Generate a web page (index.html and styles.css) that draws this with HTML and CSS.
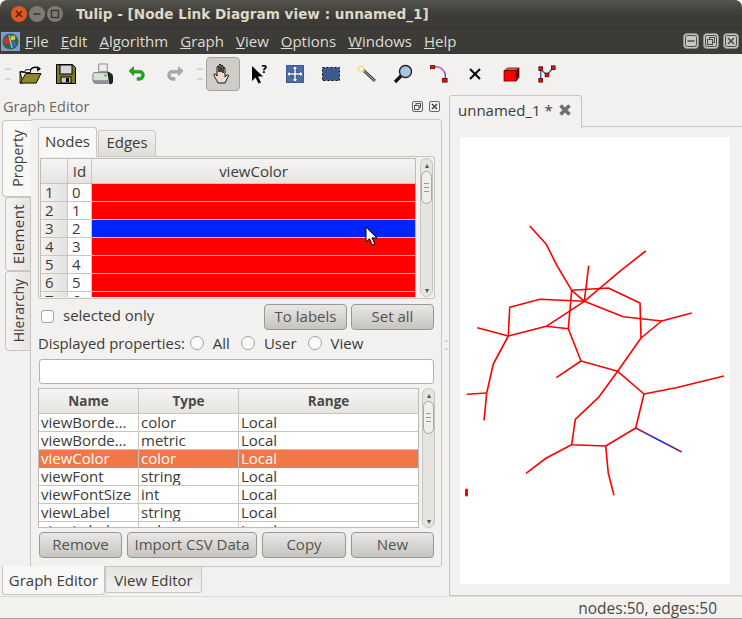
FILE: index.html
```html
<!DOCTYPE html>
<html lang="en">
<head>
<meta charset="utf-8">
<title>Tulip</title>
<link rel="stylesheet" href="styles.css">
</head>
<body>
<div class="window">
  <header class="titlebar">
    <div class="wm-buttons">
      <span class="wm wm-close"><svg width="16" height="16" viewBox="0 0 16 16"><path d="M5 5l6 6M11 5l-6 6" stroke="#4a1a08" stroke-width="1.4"/></svg></span>
      <span class="wm"><svg width="16" height="16" viewBox="0 0 16 16"><path d="M4.5 8h7" stroke="#33322e" stroke-width="1.6"/></svg></span>
      <span class="wm"><svg width="16" height="16" viewBox="0 0 16 16"><rect x="4.5" y="4.5" width="7" height="7" fill="none" stroke="#33322e" stroke-width="1.3"/></svg></span>
    </div>
    <div class="title">Tulip - [Node Link Diagram view : unnamed_1]</div>
  </header>
  <nav class="menubar">
    <svg class="app-icon" width="19" height="19" viewBox="0 0 19 19"><rect width="19" height="19" fill="#7f9ad8"/><circle cx="9.500" cy="9.500" r="8" fill="#2a6a3a"/><circle cx="6" cy="9" r="3.200" fill="#d03030"/><circle cx="12" cy="6" r="2.400" fill="#e0c040"/><circle cx="12" cy="12" r="3" fill="#4060c0"/><path d="M8 3l3 13" stroke="#9ad0a0" stroke-width="1.200"/></svg>
    <span class="menu-item"><u>F</u>ile</span>
    <span class="menu-item"><u>E</u>dit</span>
    <span class="menu-item"><u>A</u>lgorithm</span>
    <span class="menu-item"><u>G</u>raph</span>
    <span class="menu-item"><u>V</u>iew</span>
    <span class="menu-item"><u>O</u>ptions</span>
    <span class="menu-item"><u>W</u>indows</span>
    <span class="menu-item"><u>H</u>elp</span>
    <div class="mdi-buttons">
      <span class="mdi-btn"><svg width="14" height="14" viewBox="0 0 14 14"><rect x="1.500" y="1.500" width="11" height="11" rx="2" fill="none" stroke="#4c4b46"/><path d="M3.500 7h7" stroke="#4c4b46" stroke-width="1.500"/></svg></span>
      <span class="mdi-btn"><svg width="14" height="14" viewBox="0 0 14 14"><rect x="1.500" y="1.500" width="11" height="11" rx="2" fill="none" stroke="#4c4b46"/><rect x="5.500" y="3.500" width="5" height="5" fill="none" stroke="#4c4b46"/><rect x="3.500" y="5.500" width="5" height="5" fill="#c8c6c0" stroke="#4c4b46"/></svg></span>
      <span class="mdi-btn"><svg width="14" height="14" viewBox="0 0 14 14"><rect x="1.500" y="1.500" width="11" height="11" rx="2" fill="none" stroke="#4c4b46"/><path d="M4 4l6 6M10 4l-6 6" stroke="#4c4b46" stroke-width="1.700"/></svg></span>
    </div>
  </nav>
  <div class="toolbar">
    <span class="grip"></span>
    <span class="tool"><svg width="23" height="19" viewBox="0 0 24 20"><path d="M1 7h5l1-2h5v3H5z" fill="#fff" stroke="#000"/><path d="M1 7v12h3z" fill="#f4f040" stroke="#000"/><path d="M1 19L7 9h16l-5 10z" fill="#8f8628" stroke="#000"/><path d="M12 5c2-3 5-3 8-2" fill="none" stroke="#000" stroke-width="1.500"/><path d="M23 4l-4 3V1z"/></svg></span>
    <span class="tool"><svg width="20" height="20" viewBox="0 0 20 20"><path d="M.5.5h16l3 3v16H.5z" fill="#7d7a1e" stroke="#000"/><rect x="4" y="1" width="12" height="9" fill="#d8d4dc" stroke="#000"/><rect x="5" y="13" width="10" height="6" fill="#c8c8c8" stroke="#000"/><rect x="10" y="14" width="3" height="4" fill="#000"/></svg></span>
    <span class="tool"><svg width="23" height="22" viewBox="0 0 24 23"><path d="M8 1h9v8H8z" fill="#eee" stroke="#888"/><path d="M3 10h15l4 2v7H2v-7z" fill="#ddd" stroke="#777"/><path d="M17 9c4 1 6 3 6 6v4c0 2-2 4-4 3z" fill="#222"/><path d="M2 18h17l-1 4H5q-3 0-3-4z" fill="#8e8e9a"/><circle cx="15" cy="13" r="1.300" fill="#2bd32b"/></svg></span>
    <span class="tool"><svg width="18" height="18" viewBox="0 0 20 20"><path d="M5 6h7c3 0 5 2 5 5s-2 6-6 6H9v-3h2c2 0 3-1 3-3s-1-2-3-2H5v3L0 6.500 5 2z" fill="#18b018" stroke="#0a6a0a" stroke-width=".6"/></svg></span>
    <span class="tool"><svg width="18" height="18" viewBox="0 0 20 20"><path d="M15 6H8c-3 0-5 2-5 5s2 6 6 6h2v-3H9c-2 0-3-1-3-3s1-2 3-2h6v3l5-5.500L15 2z" fill="#a9a9a9" stroke="#8a8a8a" stroke-width=".6"/></svg></span>
    <span class="grip grip-second"></span>
    <span class="tool tool-active"><svg width="20" height="22" viewBox="0 0 20 22"><path d="M5 20c-1-3-4-6-4-8s2-1 3 1V4q1-2 2 0v5-7q1-2 2 0v7-6q1-2 2 0v7-5q1-2 2 0v9l2-2c2-1 2 1 1 2l-3 6z" fill="#e8dcc8" stroke="#000" stroke-width=".9"/></svg></span>
    <span class="tool"><svg width="20" height="20" viewBox="0 0 20 20"><path d="M3 2v15l3.500-3.500 3 6 2.500-1-3-6h5z"/><text class="qmark" x="12" y="9">?</text></svg></span>
    <span class="tool"><svg width="18" height="18" viewBox="0 0 18 18"><rect width="18" height="18" fill="#3b5b90"/><rect x="1" y="1" width="16" height="16" fill="#4a6ea8"/><path d="M9 1l3 3h-2v4h4V6l3 3-3 3v-2h-4v4h2l-3 3-3-3h2v-4H4v2L1 9l3-3v2h4V4H6z" fill="#fff" stroke="#1c2c50" stroke-width=".5"/></svg></span>
    <span class="tool"><svg width="18" height="14" viewBox="0 0 18 14"><rect x=".5" y=".5" width="17" height="13" fill="#3b5b90" stroke="#000" stroke-dasharray="2 2"/></svg></span>
    <span class="tool"><svg width="20" height="18" viewBox="0 0 20 18"><path d="M5 4l13 12" stroke="#333" stroke-width="3"/><path d="M5 4l13 12" stroke="#ccc" stroke-width="1"/><circle cx="4" cy="4" r="3.500" fill="#f0e090"/><circle cx="4" cy="4" r="1.600" fill="#fff"/></svg></span>
    <span class="tool"><svg width="20" height="20" viewBox="0 0 20 20"><circle cx="12.500" cy="7.500" r="6" fill="#a8c4e4" stroke="#222" stroke-width="1.400"/><path d="M8 12l-6 6" stroke="#111" stroke-width="3.200"/></svg></span>
    <span class="tool"><svg width="18" height="18" viewBox="0 0 20 20"><path d="M2 2h6q7 1 9 8v7" fill="none" stroke="#355c9a" stroke-width="1.500"/><path d="M8 2q5 1 8 6" fill="none" stroke="#ff60e0" stroke-width="2"/><rect y="0" width="5" height="4" fill="#e01818" stroke="#600"/><rect x="14" y="15" width="5" height="4" fill="#e01818" stroke="#600"/></svg></span>
    <span class="tool"><svg width="12" height="12" viewBox="0 0 12 12"><path d="M1 1l10 10M11 1L1 11" stroke="#000" stroke-width="2"/></svg></span>
    <span class="tool"><svg width="17" height="15" viewBox="0 0 18 16"><path d="M1 4l4-3h12l-3 3z" fill="#ff5050" stroke="#300" stroke-width=".7"/><path d="M14 4l3-3v10l-3 4z" fill="#900" stroke="#300" stroke-width=".7"/><rect x="1" y="4" width="13" height="11" fill="#f00" stroke="#300" stroke-width=".7"/></svg></span>
    <span class="tool"><svg width="18" height="18" viewBox="0 0 20 20"><path d="M3 4v13M3 5l7 6 7-8" fill="none" stroke="#355c9a" stroke-width="1.500"/><rect x="1" y="2" width="4" height="4" fill="#e01818" stroke="#600"/><rect x="15" y="1" width="4" height="4" fill="#e01818" stroke="#600"/><rect x="8" y="9" width="4" height="4" fill="#e01818" stroke="#600"/><rect x="1" y="15" width="4" height="4" fill="#e01818" stroke="#600"/></svg></span>
  </div>
  <main class="main">
    <section class="dock">
      <div class="dock-title">
        <span class="dock-name">Graph Editor</span>
        <svg class="dock-btn" width="11" height="11" viewBox="0 0 11 11"><rect x=".5" y=".5" width="10" height="10" rx="1.500" fill="none" stroke="#666"/><rect x="4" y="2.500" width="4.500" height="4" fill="none" stroke="#555"/><rect x="2.500" y="4.500" width="4.500" height="4" fill="#f2f1f0" stroke="#555"/></svg>
        <svg class="dock-btn" width="11" height="11" viewBox="0 0 11 11"><rect x=".5" y=".5" width="10" height="10" rx="1.500" fill="none" stroke="#666"/><path d="M3 3l5 5M8 3l-5 5" stroke="#444" stroke-width="1.500"/></svg>
      </div>
      <div class="editor">
        <div class="side-tabs">
          <span class="side-tab side-tab-active"><span class="vtext">Property</span></span>
          <span class="side-tab side-element"><span class="vtext vtext-wide">Element</span></span>
          <span class="side-tab side-hier"><span class="vtext">Hierarchy</span></span>
        </div>
        <div class="panel">
          <div class="top-tabs">
            <span class="top-tab top-tab-active">Nodes</span>
            <span class="top-tab">Edges</span>
          </div>
          <div class="table-frame nodes-frame">
            <div class="table-clip">
              <div class="grid-nodes">
                <div class="th"></div><div class="th">Id</div><div class="th">viewColor</div>
                <div class="rh">1</div><div class="id">0</div><div class="cell red"></div>
                <div class="rh">2</div><div class="id">1</div><div class="cell red"></div>
                <div class="rh">3</div><div class="id">2</div><div class="cell blue"></div>
                <div class="rh">4</div><div class="id">3</div><div class="cell red"></div>
                <div class="rh">5</div><div class="id">4</div><div class="cell red"></div>
                <div class="rh">6</div><div class="id">5</div><div class="cell red"></div>
                <div class="rh">7</div><div class="id">6</div><div class="cell red"></div>
              </div>
              <svg class="cursor" width="14" height="21" viewBox="0 0 14 21"><path d="M1 1v15l3.500-3.300 2.800 6.300 2.500-1.100-2.800-6h5z" fill="#fff" stroke="#000"/></svg>
            </div>
            <div class="scrollbar">
              <span class="arrow">▴</span>
              <div class="track"><span class="thumb"><span class="thumb-grip"></span></span></div>
              <span class="arrow">▾</span>
            </div>
          </div>
          <div class="row-selected">
            <span class="checkbox"></span>
            <span class="check-label">selected only</span>
            <span class="spacer"></span>
            <button class="btn btn-wide">To labels</button>
            <button class="btn btn-wide">Set all</button>
          </div>
          <div class="row-radios">
            <span class="radio-caption">Displayed properties:</span>
            <span class="radio"></span><span>All</span>
            <span class="radio"></span><span>User</span>
            <span class="radio"></span><span>View</span>
          </div>
          <div class="text-input"></div>
          <div class="table-frame props-frame">
            <div class="table-clip props-clip">
              <div class="grid-props">
                <div class="th th-bold">Name</div><div class="th th-bold">Type</div><div class="th th-bold">Range</div>
                <div class="pc">viewBorde…</div><div class="pc">color</div><div class="pc">Local</div>
                <div class="pc">viewBorde…</div><div class="pc">metric</div><div class="pc">Local</div>
                <div class="pc sel">viewColor</div><div class="pc sel">color</div><div class="pc sel">Local</div>
                <div class="pc">viewFont</div><div class="pc">string</div><div class="pc">Local</div>
                <div class="pc">viewFontSize</div><div class="pc">int</div><div class="pc">Local</div>
                <div class="pc">viewLabel</div><div class="pc">string</div><div class="pc">Local</div>
                <div class="pc">viewLabel…</div><div class="pc">color</div><div class="pc">Local</div>
              </div>
            </div>
            <div class="scrollbar">
              <span class="arrow">▴</span>
              <div class="track"><span class="thumb"><span class="thumb-grip"></span></span></div>
              <span class="arrow">▾</span>
            </div>
          </div>
          <div class="row-buttons">
            <button class="btn btn-remove">Remove</button>
            <button class="btn btn-import">Import CSV Data</button>
            <button class="btn btn-copy">Copy</button>
            <button class="btn btn-new">New</button>
          </div>
        </div>
      </div>
      <div class="bottom-tabs">
        <span class="bottom-tab bottom-tab-active">Graph Editor</span>
        <span class="bottom-tab bottom-tab-view">View Editor</span>
      </div>
    </section>
    <div class="splitter"><span class="split-grip"></span></div>
    <section class="views">
      <div class="view-tabs">
        <span class="view-tab">unnamed_1 *
          <svg width="14" height="14" viewBox="0 0 14 14"><path d="M2.500 2.500l9 9M11.500 2.500l-9 9" stroke="#6e6e6e" stroke-width="3.600"/></svg>
        </span>
      </div>
      <div class="view-pane">
        <div class="canvas">
          <svg class="graph" width="270" height="448" viewBox="460 137 270 448">
            <defs>
              <linearGradient id="edgeBlue" gradientUnits="userSpaceOnUse" x1="635.700" y1="428" x2="681.700" y2="452">
                <stop offset="0" stop-color="#c01040"/>
                <stop offset=".5" stop-color="#1030f0"/>
                <stop offset="1" stop-color="#a01060"/>
              </linearGradient>
            </defs>
            <g class="edges">
              <polyline points="529.700,226 546.300,244.300 557,265.700 571.700,290.300 584.300,301.300 623.300,316.700 661.700,321 691.700,313"/>
              <polyline points="571.700,290.300 608.300,288 640,303 641,338 661.700,321"/>
              <polyline points="571.700,290.300 568.300,328.700 546.300,326.300 584.300,301.300 540,299.300 509.700,307.300 508.300,336 546.300,326.300"/>
              <polyline points="645.700,251 620.700,270.700 584.300,301.300 588.700,265.700"/>
              <polyline points="477.300,327.700 508.300,336 493.300,364 486.700,393 484,420.300"/>
              <polyline points="466.700,394.300 486.700,393"/>
              <polyline points="568.300,328.700 581,361 617.700,371.300 644,394 676,387.700 724,376"/>
              <polyline points="581,361 556.300,377.700"/>
              <polyline points="641,338 617.700,371.300 598.300,397.700 575.300,419.300 571.700,444.700 605.700,446 635.700,428 644,394"/>
              <polyline points="605.700,446 608.300,473.300 614,495.300"/>
              <polyline points="571.700,444.700 546.300,458 526,473.300"/>
              <line class="edge-blue" x1="635.700" y1="428" x2="681.700" y2="452"/>
              <line class="edge-mark" x1="466.500" y1="490" x2="466.500" y2="495"/>
            </g>
          </svg>
        </div>
      </div>
    </section>
  </main>
  <footer class="statusbar">nodes:50, edges:50</footer>
</div>
</body>
</html>
```
FILE: styles.css
```css
* { box-sizing: border-box; }
html, body { margin: 0; padding: 0; background: #fff; }
body { width: 742px; height: 619px; overflow: hidden; font-family: "Open Sans", "Noto Sans", sans-serif; font-size: 15px; color: #3c3b37; }
.window { width: 742px; height: 619px; display: flex; flex-direction: column; background: #f2f1f0; border-radius: 7px 7px 0 0; overflow: hidden; border-bottom: 1px solid #a5a39e; }

.titlebar { height: 28px; flex: none; display: flex; align-items: center; background: linear-gradient(#55534d, #3c3b37 60%); padding-left: 11px; border-bottom: 1px solid #33322e; }
.wm-buttons { display: flex; gap: 2px; }
.wm { width: 16px; height: 16px; border-radius: 50%; background: #7d7a72; display: flex; }
.wm-close { background: #e2561f; }
.title { margin-left: 13px; font-weight: 700; font-size: 13.6px; color: #dfd8c8; font-family: "DejaVu Sans", sans-serif; }

.menubar { height: 26px; flex: none; display: flex; align-items: center; background: #3c3b37; color: #dfdbd2; font-size: 15px; padding-left: 1px; }
.app-icon { margin-right: 5px; }
.menu-item { margin-right: 12px; }
.mdi-buttons { margin-left: auto; display: flex; gap: 4px; padding-right: 3px; }
.mdi-btn { width: 16px; height: 16px; border-radius: 4px; background: #c8c6c0; border: 1px solid #8c8a83; display: flex; align-items: center; justify-content: center; }

.toolbar { height: 40px; flex: none; display: flex; align-items: center; padding-left: 5px; background: #f2f1f0; }
.grip { width: 6px; height: 12px; margin-right: 1px; border-top: 2px solid #d8d6d2; border-bottom: 2px solid #d8d6d2; }
.grip-second { margin-left: 5px; margin-right: 2px; }
.tool { width: 36px; height: 34px; flex: none; display: flex; align-items: center; justify-content: center; }
.tool-active { width: 34px; margin: 0 1px; background: #cfcdc9; border: 1px solid #a5a39e; border-radius: 4px; }
.qmark { font: 700 11px "DejaVu Sans", sans-serif; }

.main { flex: 1; min-height: 0; display: flex; }
.dock { width: 444px; flex: none; display: flex; flex-direction: column; }
.dock-title { height: 25px; flex: none; display: flex; align-items: center; gap: 6px; padding: 0 4px 0 3px; }
.dock-name { flex: 1; color: #6a6964; font-size: 14.5px; }
.dock-btn { flex: none; }

.editor { height: 448px; flex: none; display: flex; padding-left: 2px; }
.side-tabs { width: 28px; flex: none; display: flex; flex-direction: column; padding-top: 1px; }
.side-tab { display: flex; align-items: center; justify-content: center; border: 1px solid #c8c6c1; border-right: none; border-radius: 4px 0 0 4px; background: linear-gradient(90deg, #f5f4f3, #e6e4e1); margin-left: 3px; font-size: 14px; }
.side-tab-active { height: 77px; background: #f8f8f7; margin-left: 0; margin-right: -1px; z-index: 1; }
.side-element { height: 74px; }
.side-hier { height: 80px; }
.vtext { writing-mode: vertical-rl; transform: rotate(180deg); }
.vtext-wide { font-size: 15px; letter-spacing: .4px; }
.panel { width: 412px; flex: none; border: 1px solid #c8c6c1; border-radius: 3px; background: #f2f1f0; padding: 7px 7px 0 7px; display: flex; flex-direction: column; }

.top-tabs { display: flex; height: 30px; flex: none; position: relative; z-index: 1; margin-bottom: -1px; }
.top-tab { width: 58px; height: 27px; margin-top: 3px; margin-left: 1px; padding-bottom: 3px; display: flex; align-items: center; justify-content: center; border: 1px solid #c8c6c1; border-radius: 3px 3px 0 0; background: linear-gradient(#f2f1f0, #dfddd9); }
.top-tab-active { width: 59px; height: 30px; margin-top: 0; margin-left: 0; padding-bottom: 2px; background: #f8f8f7; border-bottom-color: #f8f8f7; }

.table-frame { display: flex; border: 1px solid #c8c6c1; border-radius: 2px; padding: 1px; gap: 4px; flex: none; width: 397px; }
.nodes-frame { height: 143px; }
.props-frame { height: 140px; border: none; padding: 0; gap: 3px; }
.table-clip { flex: 1; min-width: 0; overflow: hidden; position: relative; background: #fff; border: 1px solid #bdbbb7; border-bottom: none; }
.props-clip { border-bottom: 1px solid #bdbbb7; }
.grid-nodes { display: grid; grid-template-columns: 27px 24px 1fr; grid-auto-rows: 18px; grid-template-rows: 25px; }
.th { background: linear-gradient(#f6f5f4, #e6e4e1); border-right: 1px solid #c8c6c1; border-bottom: 1px solid #c8c6c1; display: flex; align-items: center; justify-content: center; }
.th:nth-child(3n) { border-right: none; }
.rh { background: linear-gradient(90deg, #f4f3f2, #e4e2df); border-right: 1px solid #c8c6c1; border-bottom: 1px solid #c8c6c1; padding-left: 4px; line-height: 17px; }
.id { background: #fff; border-right: 1px solid #c8c6c1; border-bottom: 1px solid #c8c6c1; padding-left: 4px; line-height: 17px; }
.cell { border-bottom: 1px solid #c8c6c1; }
.red { background: #f00; }
.blue { background: #0024ff; }
.cursor { position: absolute; left: 324px; top: 67px; }

.scrollbar { width: 13px; flex: none; display: flex; flex-direction: column; align-items: center; border: 1px solid #c8c6c1; border-radius: 7px; background: #e6e4e1; }
.arrow { height: 12px; flex: none; font-size: 8px; line-height: 12px; color: #555; }
.track { flex: 1; width: 100%; }
.thumb { display: flex; align-items: center; justify-content: center; width: 100%; height: 33px; border: 1px solid #aaa8a3; border-radius: 6px; background: #f0efed; }
.thumb-grip { width: 5px; height: 9px; border-top: 1px solid #999; border-bottom: 1px solid #999; background: linear-gradient(#f0efed 40%, #999 40%, #999 60%, #f0efed 60%); }

.row-selected { height: 35px; flex: none; display: flex; align-items: center; padding-left: 3px; gap: 4px; }
.checkbox { width: 13px; height: 13px; border: 1px solid #a5a39e; border-radius: 3px; background: #fbfbfa; margin-right: 5px; }
.check-label { margin-top: -4px; }
.spacer { flex: 1; }
.btn { font: inherit; color: #55544f; height: 26px; border: 1px solid #9a9893; border-radius: 4px; background: linear-gradient(#e9e8e6, #c6c4c0); padding: 0 0 2px; }
.btn-wide { width: 83px; }
.row-radios { height: 19px; flex: none; display: flex; align-items: center; gap: 9px; padding-bottom: 2px; }
.radio-caption { margin-right: -6px; font-size: 14.8px; }
.radio { width: 14px; height: 14px; border: 1px solid #a5a39e; border-radius: 50%; background: #fbfbfa; margin-left: 2px; }
.text-input { height: 25px; flex: none; margin: 6px 0 4px 1px; width: 395px; background: #fff; border: 1px solid #b5b3ae; border-radius: 3px; }

.grid-props { display: grid; grid-template-columns: 100px 100px 1fr; grid-template-rows: 25px; grid-auto-rows: 18px; }
.th-bold { font-weight: 700; font-size: 13.5px; color: #4a4944; }
.pc { background: #fff; border-right: 1px solid #c8c6c1; border-bottom: 1px solid #c8c6c1; padding-left: 2px; line-height: 17px; white-space: nowrap; overflow: hidden; }
.pc:nth-child(3n) { border-right: none; }
.sel { background: #f07746; color: #fff; border-bottom-color: #f07746; }

.row-buttons { height: 36px; flex: none; display: flex; align-items: flex-start; gap: 5px; padding: 4px 0 0 1px; }
.btn-remove { width: 83px; }
.btn-import { width: 130px; }
.btn-copy { width: 84px; }
.btn-new { width: 83px; }

.bottom-tabs { display: flex; padding-left: 2px; flex: none; }
.bottom-tab { width: 97px; height: 26px; display: flex; align-items: center; justify-content: center; border: 1px solid #c8c6c1; border-top: none; border-radius: 0 0 3px 3px; background: linear-gradient(#e6e4e1, #f2f1f0); }
.bottom-tab-active { width: 103px; height: 29px; background: #f8f8f7; margin-top: -1px; }

.splitter { width: 5px; flex: none; display: flex; align-items: center; justify-content: center; }
.split-grip { width: 3px; height: 10px; border-top: 2px solid #d8d6d2; border-bottom: 2px solid #d8d6d2; }
.views { flex: 1; min-width: 0; display: flex; flex-direction: column; }
.view-tabs { height: 33px; flex: none; display: flex; padding-top: 1px; position: relative; z-index: 1; margin-bottom: -1px; }
.view-tab { width: 133px; height: 33px; display: flex; align-items: center; gap: 5px; padding: 0 0 4px 8px; background: #f2f1f0; border: 1px solid #c8c6c1; border-bottom: none; border-radius: 3px 3px 0 0; }
.view-pane { flex: 1; min-height: 0; border: 1px solid #c8c6c1; border-right: none; padding: 10px 12px 11px 10px; }
.canvas { height: 100%; background: #fff; }
.graph { display: block; }
.edges polyline { fill: none; stroke: #f00; stroke-width: 1.600; stroke-linejoin: round; }
.edge-blue { stroke: url(#edgeBlue); stroke-width: 1.500; }
.edge-mark { stroke: #f00; stroke-width: 3; stroke-linecap: round; }

.statusbar { height: 22px; flex: none; display: flex; align-items: center; justify-content: flex-end; padding-right: 25px; color: #4a4944; border-top: 1px solid #dcdad6; font-size: 15.500px; }
```
